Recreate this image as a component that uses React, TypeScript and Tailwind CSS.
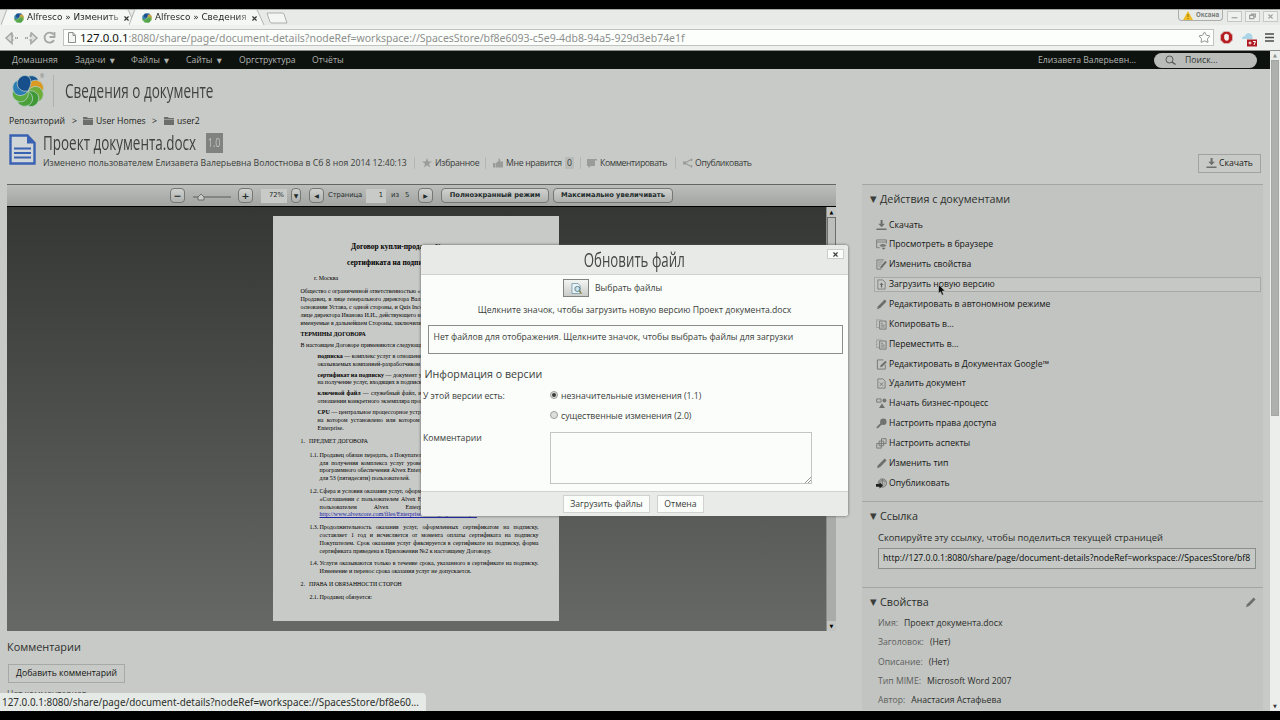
import React from 'react';
import { Star, X } from 'lucide-react';

const FONT = "font-['Open_Sans','Noto_Sans',sans-serif]";

interface Action {
  icon: string;
  label: string;
  active?: boolean;
}

const actions: Action[] = [
  { icon: 'download', label: 'Скачать' },
  { icon: 'browser', label: 'Просмотреть в браузере' },
  { icon: 'props', label: 'Изменить свойства' },
  { icon: 'upload', label: 'Загрузить новую версию', active: true },
  { icon: 'pencil', label: 'Редактировать в автономном режиме' },
  { icon: 'copy', label: 'Копировать в...' },
  { icon: 'copy', label: 'Переместить в...' },
  { icon: 'google', label: 'Редактировать в Документах Google™' },
  { icon: 'delete', label: 'Удалить документ' },
  { icon: 'workflow', label: 'Начать бизнес-процесс' },
  { icon: 'key', label: 'Настроить права доступа' },
  { icon: 'aspects', label: 'Настроить аспекты' },
  { icon: 'pencil', label: 'Изменить тип' },
  { icon: 'publish', label: 'Опубликовать' },
];

const properties = [
  { name: 'Имя:', value: 'Проект документа.docx' },
  { name: 'Заголовок:', value: '(Нет)' },
  { name: 'Описание:', value: '(Нет)' },
  { name: 'Тип MIME:', value: 'Microsoft Word 2007' },
  { name: 'Автор:', value: 'Анастасия Астафьева' },
];

function Flower({ className }: { className: string }) {
  const petals = [
    ['#18548f', 22],
    ['#dd9a22', 67],
    ['#6fae3a', 112],
    ['#3f9a36', 157],
    ['#4aa13a', 202],
    ['#58aa3e', 247],
    ['#2b7cb3', 292],
    ['#174f8c', 337],
  ] as const;
  return (
    <svg viewBox="-15 -15 30 30" className={className}>
      {petals.map(([color, angle]) => (
        <path
          key={angle}
          d="M0 0C-6 -1 -9 -7 -6 -11.5C-3 -16 4 -16.500 6 -11.500C7.500 -7 4 -3 0 0Z"
          fill={color}
          stroke="#b4cbc6"
          strokeWidth="0.7"
          transform={`rotate(${angle})`}
        />
      ))}
    </svg>
  );
}

function ActionIcon({ name }: { name: string }) {
  const sheet = <path d="M2 1h5.500l2.500 2.500V11H2z" fill="none" stroke="#737673" strokeWidth="0.9" />;
  return (
    <svg viewBox="0 0 12 12" className="h-[11px] w-[11px] shrink-0">
      {name === 'download' && (
        <path d="M5 0h2.200v4h2.500L6.100 8 2.500 4H5zM.5 9.300h11V11H.5z" fill="#6c6f6c" />
      )}
      {name === 'browser' && (
        <>
          <path d="M4 9.5H.7V1h10.600v4" fill="none" stroke="#737673" strokeWidth="1" />
          <path d="M1 3.300h10" stroke="#737673" strokeWidth="0.9" />
          <path d="M3.500 7q4-3.500 8 0q-4 3.500-8 0z" fill="#7b7e7b" />
          <path d="M6 9.500h4.500l-2.200 2.200z" fill="#6c6f6c" />
        </>
      )}
      {name === 'props' && (
        <>
          <path d="M8.500 1H1v10h5" fill="none" stroke="#737673" strokeWidth="1" />
          <path d="M2.500 3.300h5M2.500 5.500h3.500M2.500 7.700h2" stroke="#838683" strokeWidth="0.9" />
          <path d="M10.200 2l1.600 1.600L6.500 9.700 4.500 10.200l.5-2z" fill="#6c6f6c" />
        </>
      )}
      {name === 'upload' && (
        <>
          {sheet}
          <path d="M6 4L8.200 6.400H6.700V9.200H5.300V6.400H3.800z" fill="#636663" />
        </>
      )}
      {name === 'pencil' && <path d="M9.500 .6l2 2-6.900 7.200L1 11.200l1.200-3.400z" fill="#6c6f6c" />}
      {name === 'copy' && (
        <>
          <path d="M3 9.300H.7V1H6" fill="none" stroke="#838683" strokeWidth="0.9" strokeDasharray="1.200 .5" />
          <path d="M4 2.200h7V11H4z" fill="none" stroke="#737673" strokeWidth="1" />
          <path d="M5.500 4.700h2M5.500 6.700h4M5.500 8.700h4" stroke="#737673" strokeWidth="0.9" />
        </>
      )}
      {name === 'google' && (
        <>
          <path d="M10.200 6v5H1.500V1H8" fill="none" stroke="#737673" strokeWidth="1" />
          <path d="M10.200 2l1.500 1.500-5 4.900-2.200.7.700-2.200z" fill="#6c6f6c" />
        </>
      )}
      {name === 'delete' && (
        <>
          {sheet}
          <path d="M4 4.800l4 4M8 4.800L4 8.800" stroke="#737673" strokeWidth="1" />
        </>
      )}
      {name === 'workflow' && (
        <>
          <path d="M.8 1h4.700v3.500H.8z" fill="none" stroke="#737673" strokeWidth="1" />
          <circle cx="9.200" cy="2.800" r="2.200" fill="#737673" />
          <path d="M6.500 6l3.200 5H3.300z" fill="#6c6f6c" />
        </>
      )}
      {name === 'key' && (
        <>
          <circle cx="8" cy="4" r="3.500" fill="#6f726f" />
          <path d="M6 6L1 10.800" stroke="#6f726f" strokeWidth="2" />
        </>
      )}
      {name === 'aspects' && (
        <g fill="none" stroke="#737673" strokeWidth="1">
          <path d="M6 .8h5V6H6z" />
          <path d="M3.400 3.400h5v5h-5z" />
          <path d="M.8 6h5v5h-5z" />
        </g>
      )}
      {name === 'publish' && (
        <>
          <circle cx="7" cy="5.500" r="4.600" fill="#a9aca9" stroke="#6f726f" strokeWidth="0.9" />
          <path d="M3.800 4q3.200-3 6.400 0M7 1.200v8" fill="none" stroke="#6f726f" strokeWidth="0.8" />
          <path d="M0 6.500h3.800V4.700l3.800 3.500L3.800 11.500V9.500H0z" fill="#1e201e" />
        </>
      )}
    </svg>
  );
}

function Folder() {
  return (
    <svg viewBox="0 0 10 8" className="h-2 w-[10px] shrink-0">
      <path d="M0 0h4l.8 1H10v1H0zM0 2.600h10V8H0z" fill="#6b6e6b" />
    </svg>
  );
}

function BrowserTab({ title, className }: { title: string; className: string }) {
  return (
    <div className={`relative h-[16px] ${className}`}>
      <svg viewBox="0 0 137 17" className="absolute inset-0 h-full w-full" preserveAspectRatio="none">
        <path d="M0 17L5.500 1.500Q6 .5 7.500 .5H126q2 0 2.600 1.500L135 17" fill="#f4f7f4" stroke="#a9aca9" strokeWidth="0.9" />
      </svg>
      <div className="relative flex h-full items-center pt-0.5 pl-[13px]">
        <Flower className="h-[10px] w-[10px]" />
        <span className="ml-[3px] w-[95px] bg-gradient-to-r from-[#202320] from-85% to-[#b0b3b0] bg-clip-text font-['DejaVu_Sans',sans-serif] text-[8.850px] whitespace-nowrap text-transparent">
          {title}
        </span>
        <X className="ml-px h-[7px] w-[7px] text-[#333633]" strokeWidth={4} />
      </div>
    </div>
  );
}

function BrowserChrome() {
  return (
    <div className="shrink-0 font-['Noto_Sans',sans-serif]">
      <div className="flex h-4 items-end border-t border-[#a4a7a4] bg-[#e7eae7] pl-px">
        <BrowserTab title="Alfresco » Изменить" className="w-[136px] shrink-0" />
        <BrowserTab title="Alfresco » Сведения" className="-ml-2 w-[137px] shrink-0" />
        <svg viewBox="0 0 22 12" className="mb-px h-3 w-[22px]">
          <path d="M1 1h15q1.500 0 2 1l3 9H6Q4.500 11 4 10z" fill="#f4f6f4" stroke="#adb0ad" />
        </svg>
        <div className="mb-1 ml-auto flex h-[11px] w-[45px] items-center rounded-b border border-t-0 border-[#abaeab] pl-1">
          <svg viewBox="0 0 10 9" className="h-[9px] w-[10px]">
            <path d="M5 0l5 9H0z" fill="#efbd24" />
            <path d="M4.500 3h1v3h-1zM4.500 7h1v1h-1z" fill="#8c6c14" />
          </svg>
          <span className="ml-[3px] text-[6.200px] font-bold text-[#7a7d7a]">Оксана</span>
        </div>
        <div className="mr-0.5 mb-[3px] ml-1 flex gap-[3px]">
          {['M4 7h7', 'M4 4h5v4H4zM6 4V2.500h5V6H9', 'M5 3l5 5M10 3L5 8'].map((d) => (
            <svg key={d} viewBox="0 0 15 11" className="h-[11px] w-[15px] border border-[#c5c8c5] bg-[#eff1ef]">
              <path d={d} fill="none" stroke="#9da09d" strokeWidth="1.500" />
            </svg>
          ))}
        </div>
      </div>
      <div className="flex h-[26px] items-center border-b border-[#8b8e8b] bg-[#eff1ef]">
        <svg viewBox="0 0 60 16" className="h-4 w-[60px] shrink-0" fill="none" stroke="#a3a6a3" strokeWidth="1.500">
          <path d="M12 2.500L6 8l6 5.500V10h1.500M12 2.500V6h1.500M12 10V6" fill="#dcdfdc" />
          <path d="M15 8h3M25 8h3" strokeWidth="2" strokeDasharray="1.200 .6" />
          <path d="M31 2.500L37 8l-6 5.500V10h-1.500M31 2.500V6h-1.500" fill="#dcdfdc" />
          <path d="M53.500 4.500A5 5 0 1 0 54 10M54.500 2v5h-5" strokeWidth="1.800" />
        </svg>
        <div className="ml-[3px] flex h-[17px] w-[1151px] items-center border border-[#c0c3c0] bg-[#fcfefc] pr-0.5 pl-[4px]">
          <svg viewBox="0 0 8 11" className="h-[11px] w-2 shrink-0">
            <path d="M.5.5h4.500l2.500 2.700v7.300h-7zM5 .5v3h2.500" fill="#f4f6f4" stroke="#8c8f8c" />
          </svg>
          <span className="ml-1 text-[10.500px] tracking-[-0.020px] whitespace-nowrap text-[#8d908d]">
            <span className="text-[11.500px] text-[#101310]">127.0.0.1</span>
            :8080/share/page/document-details?nodeRef=workspace://SpacesStore/bf8e6093-c5e9-4db8-94a5-929d3eb74e1f
          </span>
          <Star className="ml-auto h-[13px] w-[13px] text-[#7f827f]" strokeWidth={1.6} />
        </div>
        <svg viewBox="0 0 14 14" className="ml-1.5 h-[13px] w-[13px]">
          <path d="M4.300 .5h5.400l3.800 3.800v5.400l-3.800 3.800H4.300L.5 9.700V4.300z" fill="#b51f22" stroke="#d9b6b6" />
          <path d="M4.500 6V4h1v-.8h1V3h1v.5h1V4h1v4.500q-.5 2-2.500 2-1.500 0-2.500-2.500z" fill="#f5efef" />
        </svg>
        <div className="mt-[5px] ml-2 h-4 w-4">
          <svg viewBox="0 0 16 16" className="h-4 w-4">
            <path d="M1 7q0-3 3-3 1.500-4 5-2.500 3 1 2.500 5.500z" fill="#a9d5e6" />
            <path d="M6 7.500h10v7H6z" fill="#ae1a22" />
            <path d="M7.500 11h3M9 9.500v3M12 9.500h2.500l-1.500 3.500" stroke="#fff" fill="none" />
          </svg>
        </div>
        <svg viewBox="0 0 9 9" className="ml-2 h-[9px] w-[9px]">
          <path d="M0 1h9M0 4.500h9M0 8h9" stroke="#4a4d4a" strokeWidth="1.700" />
        </svg>
      </div>
    </div>
  );
}

function NavBar() {
  return (
    <div className="flex h-[18px] shrink-0 items-center bg-[#0e120e] text-[8.67px] text-[#b0b3b0]">
      <span className="ml-3 w-[63px] tracking-[0.120px]">Домашняя</span>
      <span className="w-[56px]">Задачи <span className="ml-0.5 font-['DejaVu_Sans',sans-serif] text-[6.500px]">▼</span></span>
      <span className="w-[55px]">Файлы <span className="ml-0.5 font-['DejaVu_Sans',sans-serif] text-[6.500px]">▼</span></span>
      <span className="w-[53px]">Сайты <span className="ml-0.5 font-['DejaVu_Sans',sans-serif] text-[6.500px]">▼</span></span>
      <span className="w-[73px]">Оргструктура</span>
      <span>Отчёты</span>
      <span className="mr-[18px] ml-auto whitespace-nowrap">Елизавета Валерьевн...</span>
      <div className="mr-[13px] flex h-[15px] w-[103px] items-center rounded-full bg-[#b9bcb9] text-[#333633]">
        <svg viewBox="0 0 11 11" className="ml-[11px] h-[11px] w-[11px]" fill="none" stroke="#555855">
          <circle cx="4.500" cy="4.500" r="3.500" />
          <path d="M7 7l3.500 2.500" strokeWidth="1.500" />
        </svg>
        <span className="ml-[9px]">Поиск...</span>
      </div>
    </div>
  );
}

function MetaIcon({ d }: { d: string }) {
  return (
    <svg viewBox="0 0 10 10" className="h-[10px] w-[10px] shrink-0">
      <path d={d} fill="#999c99" />
    </svg>
  );
}

function DocumentHeader() {
  return (
    <div className="shrink-0 pl-[9px]">
      <div className="flex h-[38px] items-center pt-1.5">
        <Flower className="ml-[3px] h-8 w-8" />
        <span className="-mt-7 -ml-1 text-[5px] text-[#7b7e7b]">®</span>
        <div className="ml-[9px] h-8 w-px bg-[#aeb1ae]" />
        <h1 className="ml-[11px] origin-left scale-x-[0.692] text-[19.500px] font-normal whitespace-nowrap text-[#3e413e]">
          Сведения о документе
        </h1>
      </div>
      <div className="mt-[7px] flex h-[14px] items-center text-[8.670px] whitespace-nowrap text-[#202320]">
        <span className="w-[63px]">Репозиторий</span>
        <span className="w-[11px]">&gt;</span>
        <Folder />
        <span className="w-[56px] pl-[3px]">User Homes</span>
        <span className="w-[11px] pl-[3px]">&gt;</span>
        <span className="ml-1"><Folder /></span>
        <span className="pl-[3px]">user2</span>
      </div>
      <div className="mt-[3px] flex h-[44px]">
        <svg viewBox="0 0 27 31" className="mt-[3px] h-[31px] w-[27px] shrink-0">
          <path d="M1.500 1.500h17l7 7.500v20.500h-24z" fill="#d0d5d8" stroke="#3a62b2" strokeWidth="2.400" />
          <path d="M18 1l8 8.500h-8z" fill="#3a62b2" />
          <path d="M5 14.500h17M5 19h17M5 23.500h17" stroke="#3a62b2" strokeWidth="1.800" />
        </svg>
        <div className="ml-[7px] grow">
          <div className="flex h-[24px] items-center">
            <h2 className="w-[163px] origin-left whitespace-nowrap">
              <span className="inline-block origin-left scale-x-[0.690] text-[19.500px] leading-6 font-normal text-[#3e413e]">
                Проект документа.docx
              </span>
            </h2>
            <span className="flex h-5 w-[17px] items-center justify-center bg-[#7f827f] text-[#bfc2bf]">
              <span className="inline-block scale-x-[0.700] text-[13px]">1.0</span>
            </span>
          </div>
          <div className="flex h-4 items-center text-[8.67px] whitespace-nowrap text-[#3a3d3a]">
            <span className="w-[371px]">
              Изменено пользователем Елизавета Валерьевна Волостнова в Сб 8 ноя 2014 12:40:13
            </span>
            <span className="flex h-3 w-[71px] items-center border-l border-[#b3b6b3] pl-[7px]">
              <MetaIcon d="M5 0l1.300 3.500H10L7 5.800 8.100 9.500 5 7.300 1.900 9.500 3 5.800 0 3.500h3.700z" />
              <span className="ml-[3px] tracking-[-0.300px]">Избранное</span>
            </span>
            <span className="flex h-3 w-[95px] items-center border-l border-[#b3b6b3] pl-[7px]">
              <MetaIcon d="M0 5h2.500v4.500H0zM3 5l2.500-2V.5q2 0 1.700 3H10v6H3z" />
              <span className="ml-[3px] w-[59px] tracking-[-0.300px]">Мне нравится</span>
              <span className="h-3 bg-[#b8bbb8] px-[2px] leading-3">0</span>
            </span>
            <span className="flex h-3 w-[95px] items-center border-l border-[#b3b6b3] pl-1.5">
              <MetaIcon d="M0 1h10v1.500H8V8H4L1.500 10V8H0z" />
              <span className="ml-[3px] tracking-[-0.400px]">Комментировать</span>
            </span>
            <span className="flex h-3 items-center border-l border-[#b3b6b3] pl-[7px]">
              <MetaIcon d="M.5 5L8 1l.5 1L3 5l5.500 3L8 9zM8 .2a1.500 1.500 0 1 1 0 3zM8 6.800a1.500 1.500 0 1 1 0 3zM0 3.500h3v3H0z" />
              <span className="ml-[2px] tracking-[-0.350px]">Опубликовать</span>
            </span>
          </div>
        </div>
        <button className="mt-[23px] mr-[9px] flex h-[19px] w-[63px] items-center gap-0.5 border border-[#a0a3a0] pl-[7px] text-[8.67px] text-[#202320]">
          <ActionIcon name="download" />
          Скачать
        </button>
      </div>
    </div>
  );
}

function PdfButton({ children, className }: { children: React.ReactNode; className: string }) {
  return (
    <span
      className={`flex h-[15px] shrink-0 items-center justify-center rounded-sm border border-[#747774] bg-gradient-to-b from-[#cfd1cf] to-[#aeb1ae] whitespace-nowrap ${className}`}
    >
      {children}
    </span>
  );
}

function PdfToolbar() {
  return (
    <div className="flex h-[23px] shrink-0 items-center border-t border-b border-t-[#636663] border-b-black bg-gradient-to-b from-[#bbbebb] to-[#a1a4a1] font-['DejaVu_Sans',sans-serif] text-[6.800px] text-[#1f2c2c]">
      <PdfButton className="ml-[163px] w-[15px] text-[9.500px] leading-none font-bold">−</PdfButton>
      <svg viewBox="0 0 40 10" className="ml-[7px] h-[10px] w-[40px]">
        <path d="M1 6h38" stroke="#5b5e5b" />
        <path d="M6 6l3-3 3 3v3H6z" fill="#c9ccc9" stroke="#5b5e5b" strokeWidth="0.8" />
      </svg>
      <PdfButton className="ml-[6px] w-[15px] text-[9.500px] leading-none font-bold">+</PdfButton>
      <span className="ml-2 flex h-[14px] w-[26px] items-center justify-end bg-[#c8cac7] pr-[3px]">72%</span>
      <PdfButton className="ml-1 w-[10px] text-[6px]">▼</PdfButton>
      <PdfButton className="ml-2 w-[15px] text-[6px]">◀</PdfButton>
      <span className="ml-1 w-[38px] tracking-[-0.100px]">Страница</span>
      <span className="flex h-[14px] w-[20px] items-center justify-end bg-[#c8cac7] pr-[3px]">1</span>
      <span className="ml-[5px] w-[14px]">из</span>
      <span className="w-[10px]">5</span>
      <PdfButton className="ml-[3px] w-[15px] text-[6px]">▶</PdfButton>
      <PdfButton className="ml-2 w-[108px] text-[6.700px] font-bold">Полноэкранный режим</PdfButton>
      <PdfButton className="ml-1 w-[120px] text-[6.700px] font-bold">Максимально увеличивать</PdfButton>
    </div>
  );
}

function Lines({ lines, className }: { lines: React.ReactNode[]; className: string }) {
  return (
    <div className={className}>
      {lines.map((line, i) => (
        <div
          key={i}
          className={`h-[7.870px] whitespace-nowrap ${i < lines.length - 1 ? '[text-align-last:justify]' : ''}`}
        >
          {line}
        </div>
      ))}
    </div>
  );
}

function Clause({ num, lines, className, width }: { num: string; lines: React.ReactNode[]; className: string; width: string }) {
  return (
    <div className={`ml-[36.500px] flex ${className}`}>
      <span className="w-[10px] shrink-0 tracking-[-0.1px]">{num}</span>
      <Lines className={width} lines={lines} />
    </div>
  );
}

function ContractPage() {
  return (
    <div className="ml-[266px] h-[405px] w-[286px] bg-[#c8cac7] pt-[27px] font-['Liberation_Serif',serif] text-[6px] leading-[7.900px] whitespace-nowrap text-black">
      <div className="pl-[78px] text-[7.500px] leading-[8px] font-bold">Договор купли-продажи №</div>
      <div className="mt-[8px] pl-[74px] text-[7.500px] leading-[8px] font-bold">сертификата на подписку</div>
      <div className="mt-[7.500px] pl-[41px]">г. Москва</div>
      <Lines
        className="mt-[5.800px] ml-[27.500px] w-[120px]"
        lines={[
          'Общество с ограниченной ответственностью «',
          'Продавец, в лице генерального директора Вал',
          'основании Устава, с одной стороны, и Quis Incor',
          'лице директора Иванова И.И., действующего на',
          'именуемые в дальнейшем Стороны, заключили о',
        ]}
      />
      <div className="mt-[3.500px] pl-[27.500px] text-[5.850px] font-bold">ТЕРМИНЫ ДОГОВОРА</div>
      <div className="mt-[3px] pl-[27.500px]">В настоящем Договоре применяются следующие</div>
      <Lines
        className="mt-[3px] ml-[44.500px] w-[104px]"
        lines={[<><b>подписка</b> — комплекс услуг в отношении</>, 'оказываемых компанией-разработчиком (О']}
      />
      <Lines
        className="mt-[3px] ml-[44.500px] w-[104px]"
        lines={[<><b>сертификат на подписку</b> — документ ус</>, 'на получение услуг, входящих в подписку']}
      />
      <Lines
        className="mt-[3px] ml-[44.500px] w-[104px]"
        lines={[<><b>ключевой файл</b> — служебный файл, и</>, 'отношении конкретного экземпляра прогр']}
      />
      <Lines
        className="mt-[3px] ml-[44.500px] w-[102px]"
        lines={[<><b>CPU</b> — центральное процессорное устро</>, 'на котором установлено или котором', 'Enterprise.']}
      />
      <div className="mt-[5.800px] ml-[27.500px] flex text-[5.800px]">
        <span className="w-[8.500px]">1.</span>ПРЕДМЕТ ДОГОВОРА
      </div>
      <Clause
        num="1.1."
        className="mt-[5.500px]"
        width="w-[102px]"
        lines={[
          'Продавец обязан передать, а Покупател',
          'для получения комплекса услуг урове',
          'программного обеспечения Alvex Enterp',
          'для 53 (пятидесяти) пользователей.',
        ]}
      />
      <Clause
        num="1.2."
        className="mt-[4.700px]"
        width="w-[102px]"
        lines={[
          'Сфера и условия оказания услуг, оформ',
          '«Соглашении с пользователем Alvex E',
          'пользователем Alvex Enterp',
          <span className="text-[#1a22a8] underline">http://www.alvexcore.com/files/Enterprise/Alvex_Agreement.pdf</span>,
        ]}
      />
      <Clause
        num="1.3."
        className="mt-[4.800px]"
        width="w-[219px]"
        lines={[
          'Продолжительность оказания услуг, оформленных сертификатом на подписку,',
          'составляет 1 год и исчисляется от момента оплаты сертификата на подписку',
          'Покупателем. Срок оказания услуг фиксируется в сертификате на подписку, форма',
          'сертификата приведена в Приложении №2 к настоящему Договору.',
        ]}
      />
      <Clause
        num="1.4."
        className="mt-[4.200px]"
        width="w-[219px]"
        lines={[
          'Услуги оказываются только в течение срока, указанного в сертификате на подписку.',
          'Изменение и перенос срока оказания услуг не допускается.',
        ]}
      />
      <div className="mt-[5.200px] ml-[27.500px] flex text-[5.800px]">
        <span className="w-[8.500px]">2.</span>ПРАВА И ОБЯЗАННОСТИ СТОРОН
      </div>
      <Clause num="2.1." className="mt-[5.500px]" width="w-[219px]" lines={['Продавец обязуется:']} />
    </div>
  );
}

function Viewer() {
  return (
    <div className="flex h-[447px] w-[829px] flex-col">
      <PdfToolbar />
      <div className="flex min-h-0 grow">
        <div className="grow bg-gradient-to-b from-[#353734] to-[#676967] pt-[9px]">
          <ContractPage />
        </div>
        <div className="flex w-[10px] flex-col border-l border-[#8b8e8b] bg-[#a9aca9] text-center font-['DejaVu_Sans',sans-serif] text-[5px] leading-[10px] text-black">
          <span className="h-[10px] bg-[#c2c5c2]">▲</span>
          <div className="h-[190px] border border-[#6b6e6b] bg-[#bcbfbc]" />
          <span className="mt-auto h-[10px] bg-[#c2c5c2]">▼</span>
        </div>
      </div>
    </div>
  );
}

function PanelTitle({ children }: { children: React.ReactNode }) {
  return (
    <h3 className="flex items-center text-[10.750px] leading-[14px] text-[#2c2f2c]">
      <span className="w-[10px] font-['DejaVu_Sans',sans-serif] text-[8.500px] text-[#3a3d3a]">▼</span>
      {children}
    </h3>
  );
}

function Sidebar() {
  return (
    <div className="w-[401px] bg-[#c2c4c1] text-[8.67px] whitespace-nowrap">
      <section className="h-[317px] border-t border-[#a3a6a3] pt-[7px] pl-[8px]">
        <PanelTitle>Действия с документами</PanelTitle>
        <ul className="mt-[11.500px] flex w-[391px] flex-col gap-[4.870px] pl-[4px]">
          {actions.map((action) => (
            <li
              key={action.label}
              className={`flex h-[15px] items-center border pl-px text-[#151715] ${
                action.active ? 'border-[#a6a9a6] bg-[#c6c8c5]' : 'border-transparent'
              }`}
            >
              <ActionIcon name={action.icon} />
              <span className="ml-[2px]">{action.label}</span>
            </li>
          ))}
        </ul>
      </section>
      <section className="h-[86px] border-t border-[#a3a6a3] pt-[7px] pl-[8px]">
        <PanelTitle>Ссылка</PanelTitle>
        <p className="mt-[7px] pl-2 text-[9.370px] leading-[15px] text-[#2c2f2c]">
          Скопируйте эту ссылку, чтобы поделиться текущей страницей
        </p>
        <div className="mt-[3px] ml-2 flex h-[21px] w-[378px] items-center overflow-hidden border border-[#898f8b] bg-[#c5c8c5] pl-1 text-[8.690px] text-[#080a08]">
          http://127.0.0.1:8080/share/page/document-details?nodeRef=workspace://SpacesStore/bf8
        </div>
      </section>
      <section className="border-t border-[#a3a6a3] pt-[7px] pl-[8px]">
        <div className="flex items-center justify-between pr-[7px]">
          <PanelTitle>Свойства</PanelTitle>
          <ActionIcon name="pencil" />
        </div>
        <div className="mt-[5px] pl-2">
          {properties.map((p) => (
            <div key={p.name} className="flex h-[19.300px] items-center gap-1.5 text-[#5d605d]">
              {p.name}
              <span className="text-[#2c2f2c]">{p.value}</span>
            </div>
          ))}
        </div>
      </section>
    </div>
  );
}

function Radio({ label, checked }: { label: string; checked?: boolean }) {
  return (
    <div className="flex h-5 items-center">
      <span className="-mt-[3px] flex h-2 w-2 items-center justify-center rounded-full border border-[#9b9e9b] bg-[#dcdfdc]">
        {checked && <span className="h-1 w-1 rounded-full bg-[#3a3d3a]" />}
      </span>
      <span className="ml-[3px]">{label}</span>
    </div>
  );
}

function UpdateDialog() {
  return (
    <div className="absolute top-[245px] left-[421px] flex h-[271px] w-[427px] flex-col rounded-[3px] bg-[#fafdfa] text-[8.67px] whitespace-nowrap text-[#3a3d3a] shadow-[0_0_3px_#555]">
      <div className="relative flex h-[30px] items-center justify-center rounded-t-[3px] border-b border-[#cfd2cf] bg-[#e7eae7]">
        <h2 className="scale-x-[0.680] text-[19.500px] font-normal text-[#454845]">Обновить файл</h2>
        <button className="absolute top-1 right-1 flex h-[10px] w-[17px] items-center justify-center border border-[#cbcecb] bg-[#fafdfa]">
          <X className="h-[7px] w-[7px]" strokeWidth={4} />
        </button>
      </div>
      <div className="mt-1 flex h-[18px] items-center pl-[142px]">
        <span className="flex h-[18px] w-[26px] items-center justify-center border border-[#808380] bg-gradient-to-b from-[#f2f5f2] to-[#c9ccc9]">
          <svg viewBox="0 0 12 12" className="h-[11px] w-[11px]">
            <path d="M1 .5h6.500L10 3v8.500H1z" fill="#eaf2f4" stroke="#7ba0ae" />
            <circle cx="7" cy="6.500" r="2.800" fill="#c7e2ea" stroke="#4a7180" strokeWidth="0.900" />
            <path d="M9 8.500l2.500 3" stroke="#8a7a35" strokeWidth="1.300" />
          </svg>
        </span>
        <span className="ml-1.5">Выбрать файлы</span>
      </div>
      <p className="mt-[6px] text-center leading-[15px]">Щелкните значок, чтобы загрузить новую версию Проект документа.docx</p>
      <div className="mt-[7px] ml-[7px] h-[29px] w-[415px] border border-[#8b8e8b] pl-[4.500px] leading-[22px]">
        Нет файлов для отображения. Щелкните значок, чтобы выбрать файлы для загрузки
      </div>
      <h3 className="mt-[13px] pl-[3.500px] text-[10.670px] leading-[15px]">Информация о версии</h3>
      <div className="mt-[4px] flex pl-[2px]">
        <span className="w-[127px] leading-5">У этой версии есть:</span>
        <div>
          <Radio label="незначительные изменения (1.1)" checked />
          <Radio label="существенные изменения (2.0)" />
        </div>
      </div>
      <div className="mt-[6px] flex pl-[2px]">
        <span className="w-[127px] leading-3">Комментарии</span>
        <div className="flex h-[52px] w-[262px] items-end justify-end border border-[#c2c5c2]">
          <svg viewBox="0 0 6 6" className="h-[6px] w-[6px]">
            <path d="M0 6l6-6M3 6l3-3" stroke="#7b7e7b" strokeWidth="0.800" />
          </svg>
        </div>
      </div>
      <div className="mt-auto flex h-[25px] items-center gap-[7px] rounded-b-[3px] border-t border-[#cfd2cf] bg-[#e8ebe8] pl-[142px]">
        <button className="h-[18px] w-[87px] border border-[#cfd2cf] bg-[#fafdfa]">Загрузить файлы</button>
        <button className="h-[18px] w-[47px] border border-[#cfd2cf] bg-[#fafdfa]">Отмена</button>
      </div>
    </div>
  );
}

export default function App() {
  return (
    <div className={`relative flex h-[720px] w-[1280px] flex-col overflow-hidden bg-black py-[9px] ${FONT}`}>
      <BrowserChrome />
      <div className="flex min-h-0 grow">
        <div className="flex w-[1270px] shrink-0 flex-col overflow-hidden bg-[#c8cac7]">
          <NavBar />
          <DocumentHeader />
          <div className="mt-[9px] flex pl-[7px]">
            <div className="w-[855px]">
              <Viewer />
              <h3 className="mt-[8px] text-[10.900px] leading-4 text-[#2c2f2c]">Комментарии</h3>
              <button className="mt-[9px] ml-px h-[19px] w-[117px] border border-[#a6a9a6] text-[8.670px] text-[#151715]">
                Добавить комментарий
              </button>
              <p className="mt-[5px] text-[8.670px] leading-3 text-[#4b4e4b]">Нет комментариев</p>
            </div>
            <Sidebar />
          </div>
        </div>
        <div className="flex w-[10px] flex-col items-center bg-[#eceeec] font-['DejaVu_Sans',sans-serif] text-[5px] leading-[9px] text-[#8b8e8b]">
          <span>▲</span>
          <div className="h-[356px] w-2 border border-[#a3a6a3] bg-[#adb0ad]" />
          <span className="mt-auto text-[#3a3d3a]">▼</span>
        </div>
      </div>
      <div className="absolute bottom-[9px] left-0 h-[18px] w-[426px] rounded-tr-sm bg-[#e6eae6] pl-[2px] font-['Noto_Sans',sans-serif] text-[9.900px] leading-[18px] whitespace-nowrap text-[#2c2f2c]">
        127.0.0.1:8080/share/page/document-details?nodeRef=workspace://SpacesStore/bf8e60...
      </div>
      <UpdateDialog />
      <svg viewBox="0 0 8 12" className="absolute top-[284px] left-[938px] h-3 w-2">
        <path d="M.5.5v9l2-1.800 1.500 3.500 1.600-.7L4.200 7h3z" fill="#0b0c0b" stroke="#d5d8d5" strokeWidth="0.500" />
      </svg>
    </div>
  );
}
